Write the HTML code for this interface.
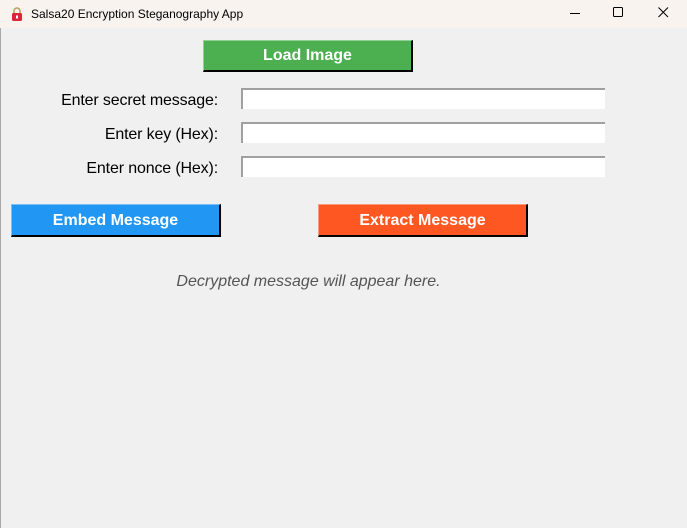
<!DOCTYPE html>
<html><head><style>
body{margin:0;width:687px;height:528px;background:#f0f0f0;font-family:"Liberation Sans",Arial,sans-serif;position:relative;overflow:hidden}
.t{position:absolute;left:0;top:0;width:687px;height:28px;background:#f8f3ef}
.tt{position:absolute;left:31px;top:7px;font-size:12px;color:#000}
.btn{position:absolute;height:30px;color:#fff;font-weight:bold;font-size:16px;text-align:center;line-height:32px;border-top:1px solid rgba(255,255,255,.4);border-left:1px solid rgba(255,255,255,.4);border-right:2px solid #000;border-bottom:2px solid #000;box-sizing:border-box}
.lbl{position:absolute;right:469px;font-size:16px;color:#000;letter-spacing:-0.15px}
.in{position:absolute;left:241px;width:364px;height:21px;background:#fff;border-top:2px solid #a0a0a0;border-left:2px solid #a0a0a0;box-sizing:border-box}
</style></head><body>
<div class="t"></div>
<svg style="position:absolute;left:9px;top:6px" width="16" height="16" viewBox="0 0 16 16"><path d="M5 7V5a3 3 0 0 1 6 0v2" fill="none" stroke="#b8a060" stroke-width="1.6"/><rect x="3" y="7" width="10" height="8" rx="1.5" fill="#d9263a"/><rect x="7" y="9.5" width="2" height="3" fill="#fff"/></svg>
<div class="tt">Salsa20 Encryption Steganography App</div>
<svg style="position:absolute;left:570px;top:13px" width="10" height="2"><rect width="10" height="1" fill="#000"/></svg>
<svg style="position:absolute;left:613px;top:7px" width="11" height="11"><rect x="0.5" y="0.5" width="9" height="9" rx="1" fill="none" stroke="#000"/></svg>
<svg style="position:absolute;left:658px;top:7px" width="11" height="11"><path d="M0.5 0.5L10 10M10 0.5L0.5 10" stroke="#000"/></svg>
<div style="position:absolute;left:0;top:28px;width:1px;height:500px;background:#a8a8a8"></div>
<div class="btn" style="left:203px;top:40px;width:210px;height:32px;line-height:30px;background:#4caf50">Load Image</div>
<div class="lbl" style="top:92px">Enter secret message:</div>
<div class="lbl" style="top:126px">Enter key (Hex):</div>
<div class="lbl" style="top:160px">Enter nonce (Hex):</div>
<div class="in" style="top:88px"></div>
<div class="in" style="top:122px"></div>
<div class="in" style="top:156px"></div>
<div class="btn" style="left:11px;top:204px;width:210px;height:33px;background:#2196f3">Embed Message</div>
<div class="btn" style="left:318px;top:204px;width:210px;height:33px;background:#ff5722">Extract Message</div>
<div style="position:absolute;left:0;width:617px;text-align:center;top:273px;font-size:16px;font-style:italic;color:#555">Decrypted message will appear here.</div>
</body></html>
